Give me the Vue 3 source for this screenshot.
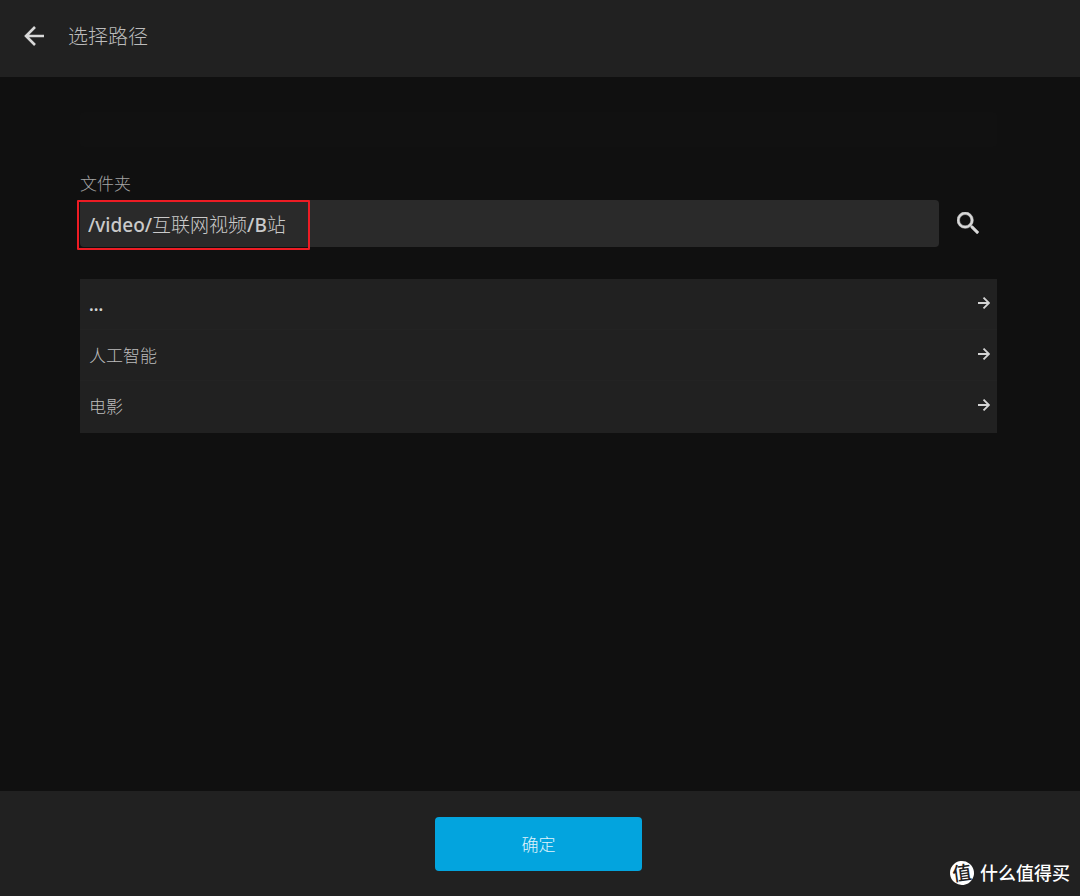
<script setup>
import { ref } from 'vue'

const path = ref('/video/互联网视频/B站')
const folders = ['...', '人工智能', '电影']
</script>

<template>
  <div class="page">
    <header class="bar">
      <button class="icon-button" type="button" aria-label="返回">
        <svg width="20" height="20" viewBox="0 0 20 20" fill="none" stroke="currentColor" stroke-width="2.6">
          <path d="M20 10H2.5M11 1L2 10l9 9" />
        </svg>
      </button>
      <h1>选择路径</h1>
    </header>

    <main class="content">
      <div class="notice"></div>
      <label for="folder">文件夹</label>
      <div class="field">
        <div class="box">
          <input id="folder" v-model="path" type="text" />
          <span class="highlight"></span>
        </div>
        <button class="icon-button search" type="button" aria-label="搜索">
          <svg width="22" height="22" viewBox="3 3 17.5 17.5" fill="currentColor" stroke="currentColor" stroke-width=".4">
            <path d="M15.5 14h-.79l-.28-.27A6.47 6.47 0 0 0 16 9.5 6.5 6.5 0 1 0 9.5 16c1.61 0 3.09-.59 4.23-1.57l.27.28v.79l5 4.99L20.49 19l-4.99-5zm-6 0C7.01 14 5 11.99 5 9.5S7.01 5 9.5 5 14 7.01 14 9.5 11.99 14 9.5 14z" />
          </svg>
        </button>
      </div>
      <ul class="list">
        <li v-for="name in folders" :key="name">
          <button class="row" type="button">
            <span :class="{ dots: name === '...' }">{{ name }}</span>
            <svg width="12" height="12" viewBox="0 0 12 12" fill="none" stroke="currentColor" stroke-width="1.8">
              <path d="M0 6h11M5.5 .6L11 6l-5.500 5.400" />
            </svg>
          </button>
        </li>
      </ul>
    </main>

    <footer class="footer">
      <button class="confirm" type="button">确定</button>
      <div class="mark">
        <span class="badge">值</span>
        <span class="brand">什么值得买</span>
      </div>
    </footer>
  </div>
</template>

<style>
body {
  margin: 0;
  background: #101010;
}
</style>

<style scoped>
.page {
  display: flex;
  flex-direction: column;
  min-height: 100vh;
  background: #101010;
  color: #bcbcbc;
  font-family: "Noto Sans CJK SC", sans-serif;
  font-weight: 300;
  font-size: 17px;
}
button,
input {
  box-sizing: border-box;
  margin: 0;
  border: 0;
  font: inherit;
  color: inherit;
}
svg {
  display: block;
  flex: none;
}
.bar {
  display: flex;
  align-items: center;
  gap: 24px;
  box-sizing: border-box;
  height: 77px;
  padding: 0 24px 6px;
  background: #212121;
}
.icon-button {
  padding: 0;
  background: none;
  color: #d8d8d8;
}
h1 {
  margin: 0;
  font-size: 20px;
  line-height: 28px;
  font-weight: 300;
}
.content {
  flex: 1;
  padding: 35px 83px 35px 80px;
}
.notice {
  height: 35px;
  margin-bottom: 24px;
  border-radius: 4px;
  background: #111;
}
label {
  display: block;
  line-height: 24px;
  margin-bottom: 5px;
  color: #a4a4a4;
}
.field {
  display: flex;
  align-items: center;
  gap: 18px;
  padding-right: 18px;
}
.search {
  padding-bottom: 2px;
}
.box {
  position: relative;
  flex: 1;
}
input {
  display: block;
  width: 100%;
  height: 47px;
  padding: 0 8px;
  border-radius: 4px;
  outline: 0;
  background: #2a2a2a;
  color: #cacaca;
  font-family: "Noto Sans", "Noto Sans CJK SC Light", "Noto Sans CJK SC", sans-serif;
  font-size: 19px;
  font-weight: 500;
}
.highlight {
  position: absolute;
  top: 0;
  left: -3px;
  box-sizing: border-box;
  width: 233px;
  height: 50px;
  border: 2px solid #ed1c24;
  border-radius: 1px;
  pointer-events: none;
}
.list {
  margin: 32px 0 0;
  padding: 0 0 1px;
  list-style: none;
  background: #212121;
}
.row {
  display: flex;
  align-items: center;
  justify-content: space-between;
  width: 100%;
  height: 51px;
  padding: 0 7px 3px 9px;
  background: none;
  text-align: left;
}
li + li {
  box-shadow: 0 -1px #232323;
}
.row svg {
  color: #d4d4d4;
}
.dots {
  padding-top: 2px;
  font-family: "Noto Sans", sans-serif;
  font-weight: 600;
  color: #d4d4d4;
}
.footer {
  position: relative;
  display: flex;
  justify-content: center;
  padding: 26px 3px 25px 0;
  background: #212121;
}
.confirm {
  width: 207px;
  height: 54px;
  padding: 0 0 2px;
  border-radius: 4px;
  background: #03a4de;
  color: #e0f4fc;
}
.mark {
  position: absolute;
  right: 10px;
  bottom: 11px;
  display: flex;
  align-items: center;
  gap: 6px;
  color: #fff;
  font-family: "Noto Sans CJK SC", sans-serif;
  font-size: 18px;
  font-weight: 500;
  line-height: 24px;
}
.brand {
  line-height: 22px;
  padding-bottom: 2px;
}
.badge {
  width: 24px;
  height: 24px;
  border-radius: 50%;
  background: #fff;
  color: #212121;
  font-size: 19px;
  line-height: 22px;
  text-align: center;
  transform: rotate(-8deg);
}
</style>
